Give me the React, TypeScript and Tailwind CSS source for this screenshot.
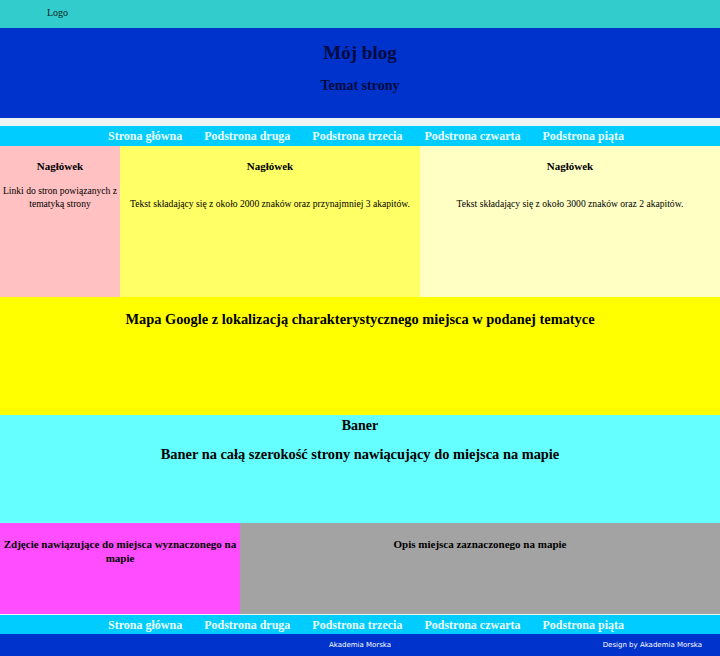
import React from "react";

const links = ["Strona główna", "Podstrona druga", "Podstrona trzecia", "Podstrona czwarta", "Podstrona piąta"];

function Nav({ h }: { h: string }) {
  return (
    <nav className={`${h} bg-[#00ccff] flex items-center justify-center gap-[22px] pl-[12px]`}>
      {links.map((l) => (
        <a key={l} className="text-[12px] font-bold text-[#eaffff] leading-none">
          {l}
        </a>
      ))}
    </nav>
  );
}

export default function App() {
  return (
    <div className="w-[720px] h-[656px] overflow-hidden font-['Liberation_Serif',serif] text-black bg-white">
      {/* Logo */}
      <div className="h-[28px] bg-[#33cccc] flex items-center pl-[47px] pb-[4px]">
        <span className="text-[10px] text-[#102020]">Logo</span>
      </div>

      {/* Header */}
      <header className="h-[90px] bg-[#0033cc] flex flex-col items-center text-[#000a40] font-bold">
        <h1 className="text-[19px] mt-[14px] leading-[22px]">Mój blog</h1>
        <h2 className="text-[14px] mt-[14px] leading-[16px]">Temat strony</h2>
      </header>

      <div className="h-[8px] bg-[#eef3f3]" />

      <Nav h="h-[20px]" />

      {/* Columns */}
      <div className="h-[151px] flex text-center">
        <div className="w-[120px] bg-[#ffc1c1] pt-[14px]">
          <h3 className="text-[11px] font-bold leading-[13px]">Nagłówek</h3>
          <p className="text-[9.6px] leading-[13px] mt-[11px]">Linki do stron powiązanych z tematyką strony</p>
        </div>
        <div className="w-[300px] bg-[#ffff66] pt-[14px]">
          <h3 className="text-[11px] font-bold leading-[13px]">Nagłówek</h3>
          <p className="text-[9.6px] leading-[13px] mt-[24px]">Tekst składający się z około 2000 znaków oraz przynajmniej 3 akapitów.</p>
        </div>
        <div className="flex-1 bg-[#ffffc4] pt-[14px]">
          <h3 className="text-[11px] font-bold leading-[13px]">Nagłówek</h3>
          <p className="text-[9.6px] leading-[13px] mt-[24px]">Tekst składający się z około 3000 znaków oraz 2 akapitów.</p>
        </div>
      </div>

      {/* Map */}
      <div className="h-[118px] bg-[#ffff00] text-center pt-[13px]">
        <h2 className="text-[14.4px] font-bold leading-[18px]">Mapa Google z lokalizacją charakterystycznego miejsca w podanej tematyce</h2>
      </div>

      {/* Banner */}
      <div className="h-[108px] bg-[#66ffff] text-center pt-[2px]">
        <h2 className="text-[14px] font-bold leading-[17px]">Baner</h2>
        <h2 className="text-[14.4px] font-bold leading-[18px] mt-[11px]">Baner na całą szerokość strony nawiącujący do miejsca na mapie</h2>
      </div>

      {/* Bottom */}
      <div className="h-[91px] flex text-center font-bold text-[11px] leading-[14px]">
        <div className="w-[240px] bg-[#ff4dff] pt-[14px]">Zdjęcie nawiązujące do miejsca wyznaczonego na mapie</div>
        <div className="flex-1 bg-[#a3a3a3] pt-[14px]">Opis miejsca zaznaczonego na mapie</div>
      </div>

      <div className="h-[1px] bg-[#e8f4f4]" />
      <Nav h="h-[19px]" />

      {/* Footer */}
      <footer className="h-[23px] bg-[#0033cc] flex items-start pt-[6px] font-['DejaVu_Sans',sans-serif] text-[7px] text-white">
        <div className="w-1/3" />
        <div className="w-1/3 text-center">Akademia Morska</div>
        <div className="w-1/3 text-right pr-[18px]">Design by Akademia Morska</div>
      </footer>
    </div>
  );
}
